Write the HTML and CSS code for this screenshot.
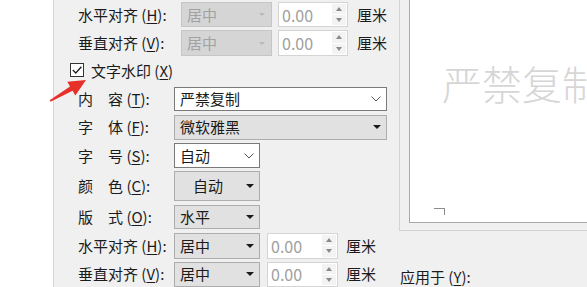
FILE: index.html
```html
<!DOCTYPE html>
<html lang="zh-CN">
<head>
<meta charset="utf-8">
<title>水印</title>
<link rel="stylesheet" href="styles.css">
</head>
<body>
<div class="screen">
  <div class="side"></div>
  <div class="dialog">
    <div class="form">
      <div class="row r1 sub">
        <span class="lbl">水平对齐 (<u>H</u>):</span>
        <div class="combo off w91"><span>居中</span><i class="tri"></i></div>
        <div class="spin w70"><span class="val">0.00</span><span class="btns"><b class="up"></b><b class="dn"></b></span></div>
        <span class="unit">厘米</span>
      </div>
      <div class="row r2 sub">
        <span class="lbl">垂直对齐 (<u>V</u>):</span>
        <div class="combo off w91"><span>居中</span><i class="tri"></i></div>
        <div class="spin w70"><span class="val">0.00</span><span class="btns"><b class="up"></b><b class="dn"></b></span></div>
        <span class="unit">厘米</span>
      </div>
      <div class="row r3">
        <span class="check"><svg width="12" height="12" viewBox="0 0 12 12"><polyline points="1.8,6 4.8,9 10.4,2.8" fill="none" stroke="#1c1c1c" stroke-width="1.3"/></svg></span>
        <span class="ctext">文字水印 (<u>X</u>)</span>
      </div>
      <div class="row r4">
        <span class="lbl"><span class="gap">内</span>容 (<u>T</u>):</span>
        <div class="edit w213"><span>严禁复制</span><svg class="chev" width="10" height="6" viewBox="0 0 10 6"><polyline points="0.5,0.5 5,5 9.5,0.5" fill="none" stroke="#555" stroke-width="1"/></svg></div>
      </div>
      <div class="row r5">
        <span class="lbl"><span class="gap">字</span>体 (<u>F</u>):</span>
        <div class="combo w213"><span>微软雅黑</span><i class="tri"></i></div>
      </div>
      <div class="row r6">
        <span class="lbl"><span class="gap">字</span>号 (<u>S</u>):</span>
        <div class="edit w86"><span>自动</span><svg class="chev" width="10" height="6" viewBox="0 0 10 6"><polyline points="0.5,0.5 5,5 9.5,0.5" fill="none" stroke="#555" stroke-width="1"/></svg></div>
      </div>
      <div class="row r7">
        <span class="lbl"><span class="gap">颜</span>色 (<u>C</u>):</span>
        <div class="combo btn w86"><span>自动</span><i class="tri"></i></div>
      </div>
      <div class="row r8">
        <span class="lbl"><span class="gap">版</span>式 (<u>O</u>):</span>
        <div class="combo w86"><span>水平</span><i class="tri"></i></div>
      </div>
      <div class="row r9">
        <span class="lbl">水平对齐 (<u>H</u>):</span>
        <div class="combo w86"><span>居中</span><i class="tri"></i></div>
        <div class="spin w71"><span class="val">0.00</span><span class="btns"><b class="up"></b><b class="dn"></b></span></div>
        <span class="unit">厘米</span>
      </div>
      <div class="row r10">
        <span class="lbl">垂直对齐 (<u>V</u>):</span>
        <div class="combo w86"><span>居中</span><i class="tri"></i></div>
        <div class="spin w71"><span class="val">0.00</span><span class="btns"><b class="up"></b><b class="dn"></b></span></div>
        <span class="unit">厘米</span>
      </div>
    </div>
    <div class="preview">
      <div class="group">
        <div class="page">
          <span class="wm">严禁复制</span>
          <i class="corner"></i>
        </div>
      </div>
      <div class="apply">应用于 (<u>Y</u>):</div>
    </div>
  </div>
  <svg class="arrow" width="587" height="287" viewBox="0 0 587 287">
    <polygon points="49.7,100.3 70,86.4 67.3,81.7 86,80 75.3,95.5 72.6,90.8 50.5,101.8" fill="#e8302a"/>
  </svg>
</div>
</body>
</html>
```
FILE: styles.css
```css
* { box-sizing: border-box; }
body {
  margin: 0;
  width: 587px;
  height: 287px;
  overflow: hidden;
  font-family: "Noto Sans CJK SC", "Noto Sans", sans-serif;
  font-size: 15px;
  color: #1b1b1b;
  background: #f0f0f0;
}
u { text-decoration: underline; text-underline-offset: 2px; text-decoration-thickness: 1px; }
.screen { position: relative; display: flex; width: 587px; height: 287px; }
.side { width: 54px; flex: none; background: #fff; border-right: 1px solid #d6d6d6; }
.dialog { flex: 1; display: flex; background: #f0f0f0; }
.form { width: 345px; flex: none; padding-left: 24px; display: flex; flex-direction: column; }
.row { display: flex; align-items: center; line-height: 20px; white-space: nowrap; }
.r1 { margin-top: 2px; height: 26px; }
.r2 { margin-top: 3px; height: 26px; }
.r3 { margin-top: 3px; height: 24px; }
.r4 { margin-top: 5px; height: 24px; }
.r5 { margin-top: 4px; height: 26px; }
.r6 { margin-top: 3px; height: 26px; }
.r7 { margin-top: 3px; height: 30px; }
.r8 { margin-top: 4px; height: 25px; }
.r9 { margin-top: 4px; height: 26px; }
.r10 { margin-top: 3px; height: 26px; }

.lbl { width: 96px; flex: none; }
.sub .lbl { width: 103px; }
.gap { margin-right: 15px; }

.check {
  width: 14px; height: 14px; margin-left: -8px; margin-top: -2px;
  border: 1px solid #333; background: #fff;
  display: flex; align-items: center; justify-content: center;
}
.ctext { margin-left: 7px; }

.combo, .edit {
  height: 100%;
  display: flex; align-items: center; justify-content: space-between;
  padding: 0 5px 0 5px;
  flex: none;
}
.combo { background: #e1e1e1; border: 1px solid #adadad; }
.combo.btn { padding-left: 18px; }
.combo.off { background: #d5d5d5; border-color: #c6c6c6; color: #a2a2a2; padding-right: 6px; }
.edit { background: #fff; border: 1px solid #7a7a7a; padding-right: 5px; }
.tri {
  width: 0; height: 0;
  border-left: 4px solid transparent; border-right: 4px solid transparent;
  border-top: 4px solid #1a1a1a;
}
.off .tri { border-left-width: 3px; border-right-width: 3px; border-top: 3px solid #b8b8b8; }
.w91 { width: 91px; }
.w213 { width: 213px; }
.w86 { width: 86px; }

.spin {
  height: 100%; flex: none;
  display: flex; background: #fff; border: 1px solid #d4d4d4;
  margin-left: 6px;
}
.w70 { width: 70px; }
.w71 { width: 71px; margin-left: 7px; }
.val { flex: 1; padding-left: 3px; color: #a0a0a0; font-size: 16px; display: flex; align-items: center; }
.btns { width: 14px; margin: 1px; display: flex; flex-direction: column; gap: 1px; }
.btns b { flex: 1; background: #f3f3f3; display: flex; align-items: center; justify-content: center; }
.btns b::after {
  content: ""; width: 0; height: 0;
  border-left: 3px solid transparent; border-right: 3px solid transparent;
}
.up::after { border-bottom: 4px solid #8a8a8a; }
.dn::after { border-top: 4px solid #8a8a8a; }
.unit { margin-left: 9px; }
.r9 .unit, .r10 .unit { margin-left: 8px; }

.preview { flex: 1; display: flex; flex-direction: column; }
.group {
  height: 241px;
  border-left: 1px solid #d4d4d4; border-bottom: 1px solid #d4d4d4;
  padding: 0 0 7px 9px;
}
.page {
  position: relative;
  height: 100%;
  background: #fff;
  border-left: 1px solid #a9a9a9; border-bottom: 1px solid #a9a9a9;
  padding: 63px 0 0 32px;
  overflow: hidden;
  white-space: nowrap;
}
.wm { font-size: 40px; line-height: 40px; color: #d6d6d6; font-weight: 300; }
.corner {
  position: absolute; left: 24px; top: 208px;
  width: 11px; height: 7px;
  border-top: 1px solid #8c8c8c; border-right: 1px solid #8c8c8c;
}
.apply { margin-top: 36px; line-height: 20px; white-space: nowrap; padding-left: 1px; }

.arrow { position: absolute; left: 0; top: 0; pointer-events: none; }
```
